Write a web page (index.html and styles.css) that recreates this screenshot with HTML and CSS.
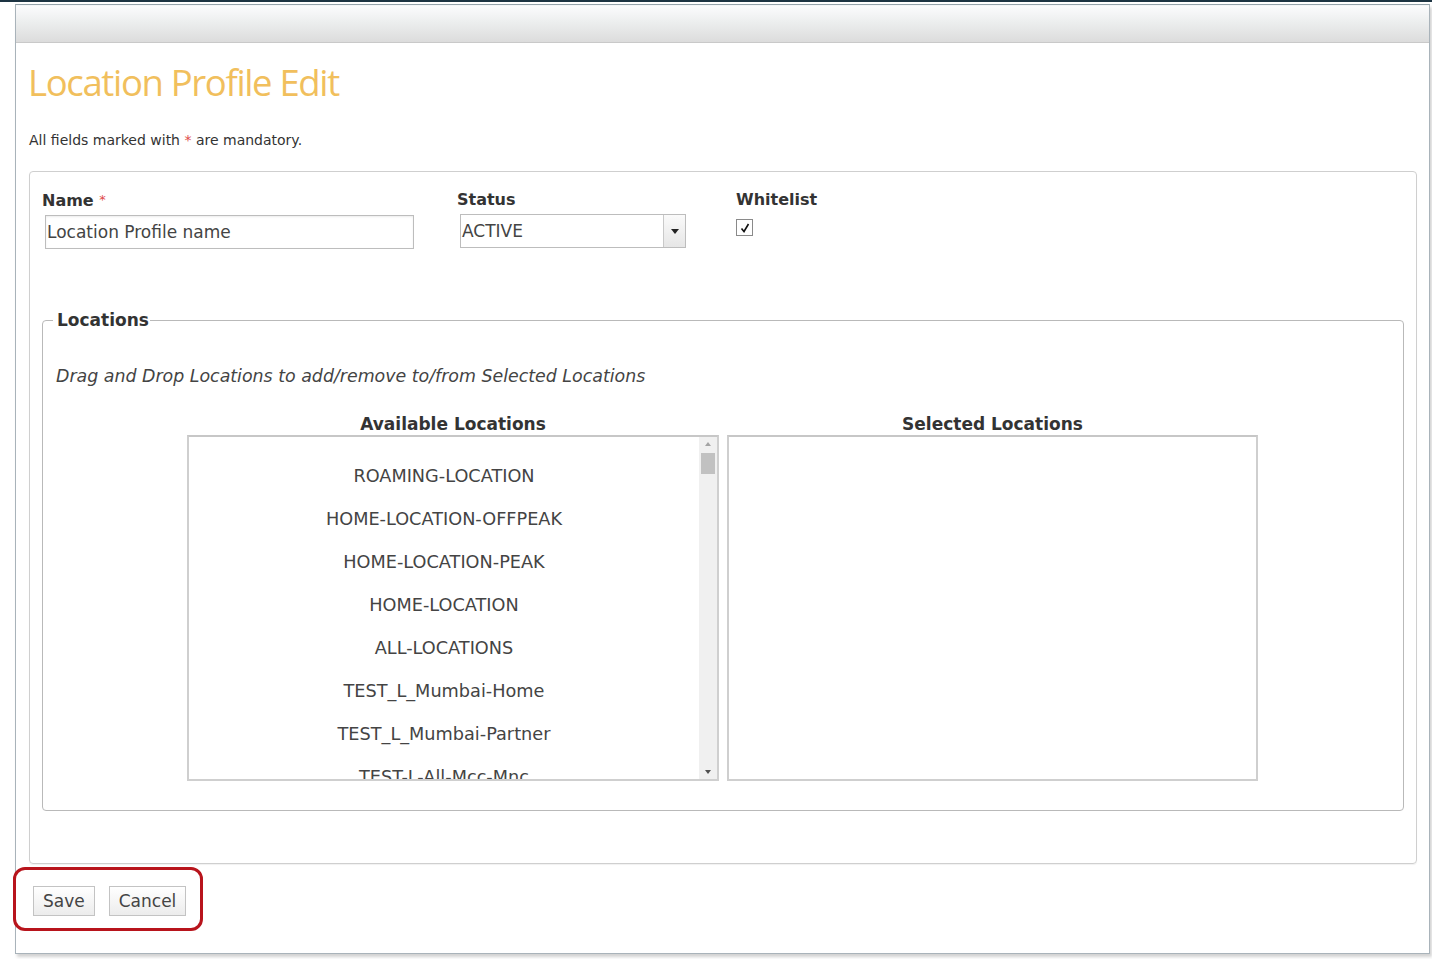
FILE: index.html
```html
<!DOCTYPE html>
<html>
<head>
<meta charset="utf-8">
<title>Location Profile Edit</title>
<link rel="stylesheet" href="styles.css">
</head>
<body>
<div class="topline"></div>
<div class="window">
  <div class="win-header"></div>
  <div class="content">
    <h1 class="title">Location Profile Edit</h1>
    <p class="note">All fields marked with <span class="req">*</span> are mandatory.</p>
    <div class="panel">
      <div class="fields">
        <div class="field field-name">
          <div class="label">Name <span class="req">*</span></div>
          <div class="input">Location Profile name</div>
        </div>
        <div class="field field-status">
          <div class="label">Status</div>
          <div class="select">
            <span class="select-value">ACTIVE</span>
            <span class="select-btn"><svg width="8" height="5" viewBox="0 0 8 5"><path d="M0 0h8L4 5z" fill="#222"/></svg></span>
          </div>
        </div>
        <div class="field field-white">
          <div class="label">Whitelist</div>
          <span class="checkbox"><svg width="12" height="12" viewBox="0 0 12 12"><path d="M2.5 6.5l2.5 3 4.5-7.5" fill="none" stroke="#111" stroke-width="1.6"/></svg></span>
        </div>
      </div>
      <fieldset class="locations">
        <legend>Locations</legend>
        <p class="hint">Drag and Drop Locations to add/remove to/from Selected Locations</p>
        <div class="lists">
          <div class="list-col">
            <div class="list-title">Available Locations</div>
            <div class="listbox available">
              <div class="items">
                <div class="item">ROAMING-LOCATION</div>
                <div class="item">HOME-LOCATION-OFFPEAK</div>
                <div class="item">HOME-LOCATION-PEAK</div>
                <div class="item">HOME-LOCATION</div>
                <div class="item">ALL-LOCATIONS</div>
                <div class="item">TEST_L_Mumbai-Home</div>
                <div class="item">TEST_L_Mumbai-Partner</div>
                <div class="item">TEST-L-All-Mcc-Mnc</div>
              </div>
              <div class="scrollbar">
                <svg class="arrow" width="18" height="14" viewBox="0 0 18 14"><path d="M6 9h6L9 5z" fill="#a3a3a3"/></svg>
                <div class="thumb"></div>
                <div class="track"></div>
                <svg class="arrow" width="18" height="14" viewBox="0 0 18 14"><path d="M6 5h6L9 9z" fill="#505050"/></svg>
              </div>
            </div>
          </div>
          <div class="list-col">
            <div class="list-title">Selected Locations</div>
            <div class="listbox selected"></div>
          </div>
        </div>
      </fieldset>
    </div>
    <div class="actions">
      <button class="btn">Save</button>
      <button class="btn">Cancel</button>
    </div>
  </div>
</div>
</body>
</html>
```
FILE: styles.css
```css
html, body {
  margin: 0;
  padding: 0;
  background: #ffffff;
}
body {
  font-family: "DejaVu Sans", Verdana, sans-serif;
  color: #444;
  width: 1432px;
  height: 959px;
  overflow: hidden;
}
.topline {
  height: 2px;
  background: #1d3443;
}
.window {
  margin: 2px 0 0 15px;
  width: 1413px;
  height: 948px;
  border: 1px solid #a9b3ba;
  border-top-color: #95a3ab;
  box-shadow: 2px 3px 3px rgba(0, 0, 0, 0.18);
  background: #fff;
  display: flex;
  flex-direction: column;
}
.win-header {
  height: 36px;
  flex: none;
  border-top: 1px solid #f4f6f8;
  background: linear-gradient(#fbfbfd, #eceeee 45%, #dcdcdc);
  border-bottom: 1px solid #c9c9c9;
}
.content {
  padding: 0 12px 0 13px;
}
.title {
  margin: 16px 0 0 -1px;
  font-family: "Open Sans", "DejaVu Sans", sans-serif;
  font-weight: normal;
  font-size: 36.5px;
  letter-spacing: -1.35px;
  line-height: 46px;
  color: #f1bf5d;
}
.note {
  margin: 26px 0 0 0;
  font-size: 14px;
  line-height: 18px;
  color: #333;
}
.req {
  color: #e04a4a;
}
.panel {
  margin-top: 22px;
  border: 1px solid #cfcfcf;
  border-radius: 4px;
  padding: 17px 12px 52px 12px;
  box-shadow: 0 1px 1px rgba(0,0,0,0.06);
}
.fields {
  display: flex;
  height: 120px;
}
.field-name { width: 415px; }
.field-status { width: 279px; }
.label {
  font-weight: bold;
  font-size: 16px;
  line-height: 22px;
  color: #333;
}
.label .req {
  font-weight: normal;
  font-size: 13px;
  vertical-align: 2px;
}
.input {
  margin: 3px 0 0 3px;
  width: 366px;
  height: 32px;
  border: 1px solid #bdbdbd;
  box-shadow: inset 0 1px 2px rgba(0,0,0,0.08);
  font-size: 17px;
  line-height: 32px;
  padding-left: 1px;
  box-sizing: content-box;
  color: #444;
}
.select {
  margin: 3px 0 0 3px;
  width: 224px;
  height: 32px;
  border: 1px solid #bdbdbd;
  display: flex;
  font-size: 17px;
  line-height: 32px;
}
.select-value {
  flex: 1;
  padding-left: 1px;
  color: #444;
}
.select-btn {
  width: 21px;
  border-left: 1px solid #c9c9c9;
  background: linear-gradient(#fafafa, #e6e6e6);
  display: flex;
  align-items: center;
  justify-content: center;
}
.checkbox {
  margin-top: 8px;
  width: 15px;
  height: 15px;
  border: 1px solid #8a8a8a;
  display: flex;
  align-items: center;
  justify-content: center;
  background: #fff;
}
.locations {
  margin: 0;
  border: 1px solid #b9b9b9;
  border-radius: 4px;
  padding: 0 0 29px 0;
  min-width: 0;
}
.locations legend {
  margin-left: 10px;
  padding: 0 1px 0 4px;
  font-weight: bold;
  font-size: 17px;
  line-height: 22px;
  color: #333;
}
.hint {
  margin: 34px 0 0 13px;
  font-style: italic;
  font-size: 17.4px;
  line-height: 22px;
  color: #444;
}
.lists {
  display: flex;
  gap: 8px;
  margin: 26px 0 0 144px;
}
.list-col {
  display: flex;
  flex-direction: column;
}
.list-title {
  text-align: center;
  font-weight: bold;
  font-size: 17px;
  line-height: 22px;
  color: #333;
  margin-bottom: 0;
}
.listbox {
  height: 342px;
  border: 2px solid #cfcfcf;
  border-top-color: #c7c7c7;
  overflow: hidden;
}
.available {
  width: 528px;
  display: flex;
}
.selected {
  width: 527px;
}
.items {
  flex: 1;
  padding-top: 18px;
  text-align: center;
  font-size: 17.7px;
  line-height: 43px;
  color: #444;
  overflow: hidden;
}
.scrollbar {
  width: 18px;
  background: #f0f0f0;
  display: flex;
  flex-direction: column;
}
.arrow { display: block; flex: none; }
.thumb {
  margin: 2px 2px 0 2px;
  height: 21px;
  background: #c1c1c1;
}
.track { flex: 1; }
.actions {
  margin: 3px 0 0 -16px;
  width: 152px;
  height: 30px;
  padding: 16px 15px 12px 17px;
  border: 3px solid #b8141c;
  border-radius: 12px;
  display: flex;
  gap: 14px;
}
.btn {
  height: 30px;
  margin: 0;
  padding: 0 9px;
  border: 1px solid #c3c3c3;
  background: linear-gradient(#ffffff, #ececec);
  font-family: "DejaVu Sans", Verdana, sans-serif;
  font-size: 17px;
  color: #444;
  line-height: 28px;
}
```
